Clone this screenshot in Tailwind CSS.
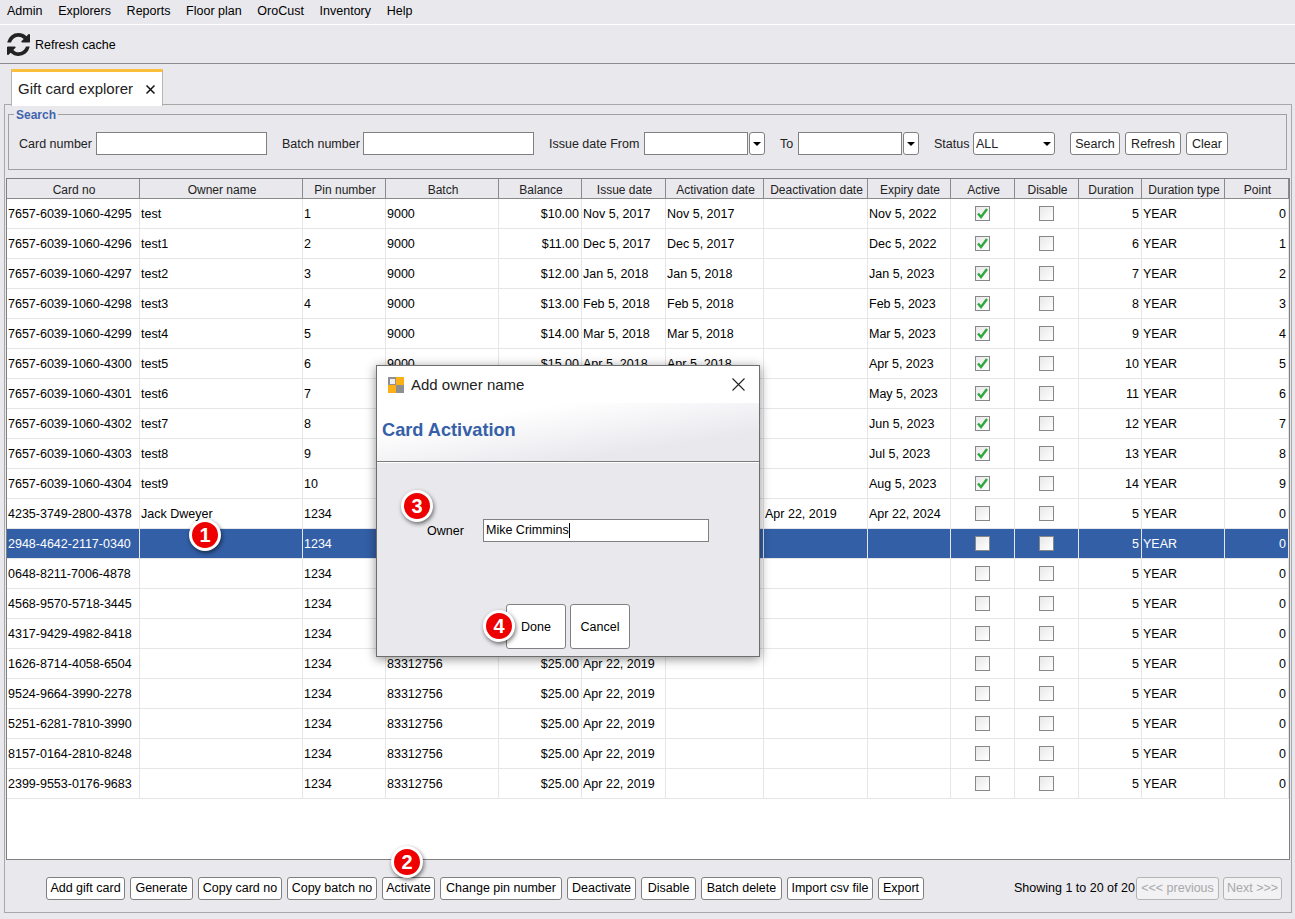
<!DOCTYPE html>
<html lang="en">
<head>
  <meta charset="UTF-8">
  <title>Gift card explorer</title>
  <script src="https://cdn.jsdelivr.net/npm/@tailwindcss/browser@4"></script>
</head>
<body class="relative w-[1295px] h-[919px] overflow-hidden bg-[#e9e8ed] text-black text-[12.5px] font-['Liberation_Sans',Arial,sans-serif]">
  <!-- menu bar -->
  <nav class="flex items-center gap-[15.7px] h-[25px] pl-[7px] pb-[2px] border-b border-white">
    <span>Admin</span><span>Explorers</span><span>Reports</span><span>Floor plan</span><span>OroCust</span><span>Inventory</span><span>Help</span>
  </nav>

  <!-- toolbar -->
  <div class="flex items-center gap-[5px] h-[39px] pl-[7px] border-b border-[#8c8c8c]">
    <svg class="w-[23px] h-[23px]" viewBox="0 0 1536 1536" fill="#222"><path d="M1511 928q0 5-1 7-64 268-268 434.5T764 1536q-146 0-282.5-55T238 1324l-129 129q-19 19-45 19t-45-19-19-45V960q0-26 19-45t45-19h448q26 0 45 19t19 45-19 45l-137 137q71 66 161 102t187 36q134 0 250-65t186-179q11-17 53-117 8-23 30-23h192q13 0 22.5 9.5t9.5 22.5zm25-800v448q0 26-19 45t-45 19h-448q-26 0-45-19t-19-45 19-45l138-138Q969 256 768 256q-134 0-250 65T332 500q-11 17-53 117-8 23-30 23H50q-13 0-22.5-9.5T18 608v-7q65-268 270-434.5T768 0q146 0 284 55.5T1297 212l130-129q19-19 45-19t45 19 19 45z"/></svg>
    <span class="pt-[2px]">Refresh cache</span>
  </div>

  <!-- tab strip -->
  <div class="flex pl-[11px] pt-[5px] h-[41px]">
    <div class="relative z-10 flex items-center w-[152px] h-[37px] pl-[6px] bg-white border-t-[3px] border-[#fcbf3b] border-x border-x-[#b5b5b5] text-[15px] text-[#222]">
      <span>Gift card explorer</span>
      <svg class="ml-[13px] w-[9px] h-[9px]" viewBox="0 0 9 9" stroke="#111" stroke-width="1.5" fill="none"><path d="M.5.5l8 8M8.500.5l-8 8"/></svg>
    </div>
  </div>

  <!-- tab content -->
  <main class="flex flex-col mx-[4px] w-[1288px] h-[809px] -mt-px px-[1px] border border-[#a8a8a8]">
    <fieldset class="mx-[2px] h-[65px] w-[1279px] px-[10px] border border-[#a0a0a0]">
      <legend class="px-[2px] pt-px -ml-[5px] font-bold text-[12px] text-[#3f64ad]">Search</legend>
      <div class="flex items-center h-[23px] mt-[8px] text-[#222]">
        <span class="w-[77px] pt-px">Card number</span>
        <input class="w-[171px] h-[23px] bg-white border border-[#808080]">
        <span class="ml-[15px] w-[81px] pt-px">Batch number</span>
        <input class="w-[171px] h-[23px] bg-white border border-[#808080]">
        <span class="ml-[15px] w-[95px] pt-px">Issue date From</span>
        <input class="w-[104px] h-[23px] bg-white border border-[#808080]">
        <span class="flex items-center justify-center w-[16px] h-[23px] ml-[1px] bg-white border border-[#808080] rounded-[3px]"><span class="border-x-[4px] border-x-transparent border-t-[4px] border-t-black"></span></span>
        <span class="ml-[15px] w-[18px] pt-px">To</span>
        <input class="w-[104px] h-[23px] bg-white border border-[#808080]">
        <span class="flex items-center justify-center w-[16px] h-[23px] ml-[1px] bg-white border border-[#808080] rounded-[3px]"><span class="border-x-[4px] border-x-transparent border-t-[4px] border-t-black"></span></span>
        <span class="ml-[15px] w-[39px] pt-px">Status</span>
        <span class="flex items-center justify-between w-[82px] h-[23px] pl-[2px] pr-[3px] pt-px bg-white border border-[#808080] rounded-[3px]">ALL<span class="border-x-[4px] border-x-transparent border-t-[4px] border-t-black"></span></span>
        <button class="ml-[15px] w-[50px] h-[23px] pt-px bg-white border border-[#808080] rounded-[3px]">Search</button>
        <button class="ml-[5px] w-[56px] h-[23px] pt-px bg-white border border-[#808080] rounded-[3px]">Refresh</button>
        <button class="ml-[5px] w-[42px] h-[23px] pt-px bg-white border border-[#808080] rounded-[3px]">Clear</button>
      </div>
    </fieldset>

    <!-- grid -->
    <div class="mt-[8px] w-[1284px] h-[682px] shrink-0 bg-white border border-[#808080]">
      <table class="table-fixed border-separate border-spacing-0 w-[1282px]">
        <colgroup id="cols"></colgroup>
        <thead><tr id="head"></tr></thead>
        <tbody id="rows"></tbody>
      </table>
    </div>

    <!-- actions -->
    <footer class="flex items-center h-[52px] pl-[40px] pt-[5px]">
      <div class="flex gap-[5px]">
        <button class="w-[79px] h-[23px] bg-white border border-[#808080] rounded-[3px]">Add gift card</button>
        <button class="w-[63px] h-[23px] bg-white border border-[#808080] rounded-[3px]">Generate</button>
        <button class="w-[84px] h-[23px] bg-white border border-[#808080] rounded-[3px]">Copy card no</button>
        <button class="w-[90px] h-[23px] bg-white border border-[#808080] rounded-[3px]">Copy batch no</button>
        <button class="w-[53px] h-[23px] bg-white border border-[#808080] rounded-[3px]">Activate</button>
        <button class="w-[122px] h-[23px] bg-white border border-[#808080] rounded-[3px]">Change pin number</button>
        <button class="w-[69px] h-[23px] bg-white border border-[#808080] rounded-[3px]">Deactivate</button>
        <button class="w-[55px] h-[23px] bg-white border border-[#808080] rounded-[3px]">Disable</button>
        <button class="w-[81px] h-[23px] bg-white border border-[#808080] rounded-[3px]">Batch delete</button>
        <button class="w-[86px] h-[23px] bg-white border border-[#808080] rounded-[3px]">Import csv file</button>
        <button class="w-[46px] h-[23px] bg-white border border-[#808080] rounded-[3px]">Export</button>
      </div>
      <span class="ml-[90px] w-[122px] whitespace-nowrap">Showing 1 to 20 of 20</span>
      <button class="w-[83px] h-[23px] bg-white/40 border border-[#b4b4b4] rounded-[3px] text-[#a8a8a8]">&lt;&lt;&lt; previous</button>
      <button class="ml-[4px] w-[59px] h-[23px] bg-white/40 border border-[#b4b4b4] rounded-[3px] text-[#a8a8a8]">Next &gt;&gt;&gt;</button>
    </footer>
  </main>

  <!-- activation dialog -->
  <div class="absolute left-[376px] top-[365px] w-[384px] h-[292px] bg-[#e9e8ed] border border-[#6e6e6e] shadow-[0_2px_10px_rgba(0,0,0,0.45)]">
    <div class="flex items-center h-[37px] pl-[11px] bg-white text-[15px] text-[#222]">
      <svg class="w-[16px] h-[16px]" viewBox="0 0 16 16"><rect width="8" height="8" fill="#8f8f8f"/><rect x="2" y="2" width="5" height="5" fill="#eee"/><rect x="8" width="8" height="8" fill="#fbb116"/><rect y="8" width="8" height="8" fill="#fbb116"/><rect x="8" y="8" width="8" height="8" fill="#8f8f8f"/></svg>
      <span class="ml-[7px] pt-[1px]">Add owner name</span>
      <svg class="ml-auto mr-[14px] w-[13px] h-[13px]" viewBox="0 0 13 13" stroke="#222" stroke-width="1.1" fill="none"><path d="M.5.5l12 12M12.500.5l-12 12"/></svg>
    </div>
    <div class="flex items-center h-[59px] pl-[5px] pb-[3px] border-b border-[#7a7a7a] bg-linear-to-br from-white from-25% to-[#e9e8ed] to-75% font-bold text-[18.2px] text-[#3560a8]">Card Activation</div>
    <div class="h-[194px] border-t border-white">
      <div class="flex items-center pt-[56px] pl-[50px]">
        <span class="w-[56px] pt-px">Owner</span>
        <div class="flex items-center w-[226px] h-[23px] pl-[2px] bg-white border border-[#808080]">Mike Crimmins<span class="w-px h-[15px] bg-black"></span></div>
      </div>
      <div class="flex gap-[4px] pt-[62px] pl-[129px]">
        <button class="w-[60px] h-[45px] pt-[2px] bg-white border border-[#808080] rounded-[3px]">Done</button>
        <button class="w-[60px] h-[45px] pt-[2px] bg-white border border-[#808080] rounded-[3px]">Cancel</button>
      </div>
    </div>
  </div>

  <!-- numbered callouts -->
  <span class="absolute left-[189px] top-[519px] flex items-center justify-center w-[32px] h-[32px] rounded-full bg-[#ee0000] border-[3px] border-white shadow-[1px_2px_4px_rgba(0,0,0,0.55)] font-bold text-[20px] text-white">1</span>
  <span class="absolute left-[391px] top-[846px] flex items-center justify-center w-[32px] h-[32px] rounded-full bg-[#ee0000] border-[3px] border-white shadow-[1px_2px_4px_rgba(0,0,0,0.55)] font-bold text-[20px] text-white">2</span>
  <span class="absolute left-[401px] top-[490px] flex items-center justify-center w-[32px] h-[32px] rounded-full bg-[#ee0000] border-[3px] border-white shadow-[1px_2px_4px_rgba(0,0,0,0.55)] font-bold text-[20px] text-white">3</span>
  <span class="absolute left-[483px] top-[610px] flex items-center justify-center w-[32px] h-[32px] rounded-full bg-[#ee0000] border-[3px] border-white shadow-[1px_2px_4px_rgba(0,0,0,0.55)] font-bold text-[20px] text-white">4</span>

  <script>
    const columns = [
      ['Card no', 133], ['Owner name', 163], ['Pin number', 83], ['Batch', 113], ['Balance', 83],
      ['Issue date', 84], ['Activation date', 98], ['Deactivation date', 104], ['Expiry date', 83],
      ['Active', 64], ['Disable', 64], ['Duration', 63], ['Duration type', 83], ['Point', 64]
    ];

    const months = ['Nov', 'Dec', 'Jan', 'Feb', 'Mar', 'Apr', 'May', 'Jun', 'Jul', 'Aug'];
    const rows = [];
    for (let i = 0; i < 10; i++) {
      const issueYear = i < 2 ? 2017 : 2018;
      const expiryYear = i < 2 ? 2022 : 2023;
      const issued = `${months[i]} 5, ${issueYear}`;
      rows.push([`7657-6039-1060-${4295 + i}`, i === 0 ? 'test' : `test${i}`, i + 1, 9000, `$${10 + i}.00`,
        issued, issued, '', `${months[i]} 5, ${expiryYear}`, true, false, 5 + i, 'YEAR', i]);
    }
    rows.push(['4235-3749-2800-4378', 'Jack Dweyer', 1234, 83312756, '$25.00', 'Apr 22, 2019', 'Apr 22, 2019', 'Apr 22, 2019', 'Apr 22, 2024', false, false, 5, 'YEAR', 0]);
    ['2948-4642-2117-0340', '0648-8211-7006-4878', '4568-9570-5718-3445', '4317-9429-4982-8418', '1626-8714-4058-6504',
     '9524-9664-3990-2278', '5251-6281-7810-3990', '8157-0164-2810-8248', '2399-9553-0176-9683'].forEach(card => {
      rows.push([card, '', 1234, 83312756, '$25.00', 'Apr 22, 2019', '', '', '', false, false, 5, 'YEAR', 0]);
    });

    const headCell = 'h-[20px] p-0 pl-[2px] pt-[2px] leading-[16px] text-center font-normal text-[12px] text-[#222] bg-[#e9e8ed] border-r border-b border-r-[#8a8a8a] border-b-[#8a8a8a]';
    const bodyCell = 'h-[30px] p-0 pl-px pr-[2px] pt-px whitespace-nowrap overflow-hidden border-r border-b border-[#e6e6ea]';
    const selectedCell = 'h-[30px] p-0 pl-px pr-[2px] pt-px whitespace-nowrap overflow-hidden border-r border-b border-[#e6e6ea] bg-[#335fa6] text-white';
    const checkCell = 'h-[30px] p-0 border-r border-b border-[#e6e6ea]';
    const selectedCheckCell = 'h-[30px] p-0 border-r border-b border-[#e6e6ea] bg-[#335fa6]';

    const checkbox = on => `<span class="flex items-center justify-center mx-auto w-[15px] h-[15px] border border-[#888] bg-linear-to-br from-[#e8e8e8] to-white">${on ? '<svg class="w-[11px] h-[11px]" viewBox="0 0 11 11" fill="none" stroke="#2fa83f" stroke-width="2.400"><path d="M1 5.500l3 3.500 6-8"/></svg>' : ''}</span>`;

    document.getElementById('cols').innerHTML = columns.map(c => `<col style="width:${c[1]}px">`).join('');
    document.getElementById('head').innerHTML = columns.map(c => `<th class="${headCell}">${c[0]}</th>`).join('');
    document.getElementById('rows').innerHTML = rows.map((row, r) => '<tr>' + row.map((val, c) => {
      if (c === 9 || c === 10) return `<td class="${r === 11 ? selectedCheckCell : checkCell}">${checkbox(val)}</td>`;
      const base = r === 11 ? selectedCell : bodyCell;
      const align = c === 4 || c === 11 || c === 13 ? ' text-right' : '';
      return `<td class="${base}${align}">${val}</td>`;
    }).join('') + '</tr>').join('');
  </script>
</body>
</html>
